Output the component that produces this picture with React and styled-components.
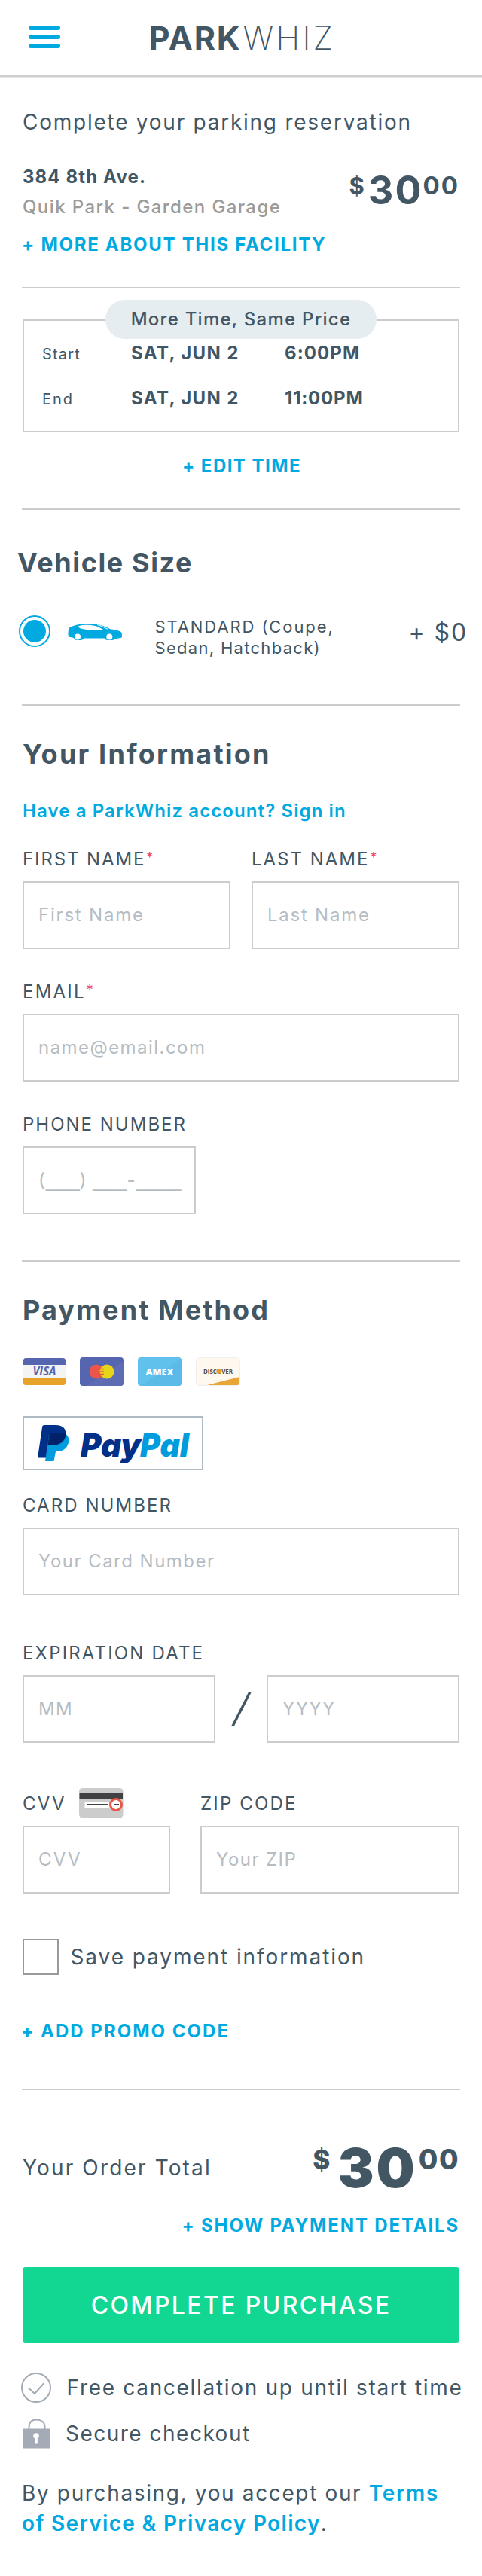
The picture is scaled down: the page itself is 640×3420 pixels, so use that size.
import React from "react";
import styled, { createGlobalStyle, css } from "styled-components";

const color = {
  ink: "#425664",
  blue: "#00a9e0",
  muted: "#9b9b9b",
  hint: "#b5bdc4",
  line: "#cccccc",
  pill: "#e6edf1",
  green: "#12d792",
  red: "#f0455a",
  icon: "#a4abb6",
};

const GlobalStyle = createGlobalStyle`
  *, *::before, *::after { box-sizing: border-box; }
  body {
    margin: 0;
    background: #fff;
    color: ${color.ink};
    font-family: Inter, "Liberation Sans", sans-serif;
  }
`;

const type = (size, lineHeight, weight) => css`
  font-size: ${size}px;
  line-height: ${lineHeight}px;
  font-weight: ${weight};
  letter-spacing: ${(p) => p.$track ?? 1.7}px;
  white-space: nowrap;
`;

const Page = styled.main`
  width: 640px;
  height: 3420px;
  overflow: hidden;
`;

const Header = styled.header`
  position: relative;
  height: 100px;
  display: flex;
  justify-content: center;
  padding: 24px 0 0 3px;
  box-shadow: 0 2px 0 #cfcfcf, 0 3px 1px #e4e4e4;
`;

const MenuButton = styled.button`
  position: absolute;
  left: 38px;
  top: 34px;
  width: 42px;
  display: flex;
  flex-direction: column;
  gap: 6px;
  padding: 0;
  border: 0;
  background: none;
`;

const MenuBar = styled.span`
  height: 6px;
  border-radius: 3px;
  background: ${color.blue};
`;

const Logo = styled.div`
  ${type(43, 53, 700)}
  display: flex;
  gap: 2px;
`;

const LogoThin = styled.span`
  font-weight: 200;
  letter-spacing: 3.2px;
`;

const Content = styled.div`
  display: flex;
  flex-direction: column;
  padding: 0 30px;
`;

const Divider = styled.hr`
  align-self: stretch;
  height: 2px;
  margin: ${(p) => p.$above}px -1px 0;
  border: 0;
  background: ${color.line};
`;

const Intro = styled.h1`
  ${type(28, 40, 400)}
  margin: 42px 0 0;
`;

const Facility = styled.section`
  display: flex;
  justify-content: space-between;
  margin-top: 33px;
`;

const Address = styled.div`
  ${type(24, 40, 700)}
`;

const Operator = styled.div`
  ${type(24, 40, 500)}
  color: ${color.muted};
`;

const ActionLink = styled.a`
  ${type(24, 30, 700)}
  display: block;
  align-self: ${(p) => p.$align || "flex-start"};
  margin-top: ${(p) => p.$above}px;
  margin-left: ${(p) => p.$nudge || 0}px;
  color: ${color.blue};
`;

const Price = styled.div`
  display: flex;
  align-items: flex-start;
  margin-top: ${(p) => (p.$large ? 0 : 12)}px;
  font-weight: ${(p) => (p.$large ? 800 : 700)};
  white-space: nowrap;
`;

const PriceSign = styled.span`
  margin-top: ${(p) => (p.$large ? 7 : 3)}px;
  margin-right: ${(p) => (p.$large ? 10 : 5)}px;
  font-size: ${(p) => (p.$large ? 35 : 31)}px;
  line-height: ${(p) => (p.$large ? 36 : 33)}px;
`;

const PriceWhole = styled.span`
  font-size: ${(p) => (p.$large ? 72 : 52)}px;
  font-weight: ${(p) => (p.$large ? 900 : 700)};
  line-height: ${(p) => (p.$large ? 72 : 52)}px;
  letter-spacing: ${(p) => (p.$large ? 3 : 2)}px;
`;

const PriceCents = styled.span`
  margin-top: ${(p) => (p.$large ? 7 : 3)}px;
  margin-left: ${(p) => (p.$large ? 2 : 0)}px;
  font-size: ${(p) => (p.$large ? 37 : 33)}px;
  line-height: ${(p) => (p.$large ? 36 : 33)}px;
  letter-spacing: ${(p) => (p.$large ? 1.5 : 2)}px;
`;

const TimeBox = styled.section`
  position: relative;
  display: flex;
  flex-direction: column;
  gap: 30px;
  height: 150px;
  margin-top: 41px;
  padding: 28px 24px 0;
  border: 2px solid ${color.line};
`;

const TimePill = styled.div`
  ${type(24, 51, 500)}
  position: absolute;
  top: -28px;
  left: 108px;
  width: 360px;
  height: 52px;
  border-radius: 26px;
  background: ${color.pill};
  text-align: center;
`;

const TimeRow = styled.div`
  display: grid;
  grid-template-columns: 118px 204px 1fr;
  align-items: baseline;
  height: 30px;
`;

const TimeLabel = styled.span`
  ${type(20, 30, 400)}
`;

const TimeValue = styled.span`
  ${type(24, 30, 700)}
`;

const Heading = styled.h2`
  ${type(36, 44, 700)}
  margin: ${(p) => p.$above}px 0 0 ${(p) => p.$nudge || 0}px;
`;

const VehicleRow = styled.label`
  display: flex;
  align-items: flex-start;
  margin: 48px -11px 0 -5px;
`;

const Radio = styled.span`
  width: 42px;
  height: 42px;
  border: 2px solid ${color.blue};
  border-radius: 50%;
  padding: 4px;
`;

const RadioDot = styled.span`
  display: block;
  width: 30px;
  height: 30px;
  border-radius: 50%;
  background: ${color.blue};
`;

const CarIcon = styled.svg`
  margin: 11px 0 0 23px;
`;

const VehicleText = styled.span`
  ${type(22, 28, 400)}
  display: flex;
  flex-direction: column;
  flex: 1;
  margin: 1px 0 0 43.5px;
`;

const VehicleLine = styled.span`
  letter-spacing: ${(p) => p.$track}px;
`;

const VehiclePrice = styled.span`
  ${type(32, 40, 400)}
  margin-top: 3px;
`;

const SignIn = styled.a`
  ${type(24, 30, 600)}
  margin-top: 39px;
  color: ${color.blue};
`;

const FieldRow = styled.div`
  display: flex;
  gap: ${(p) => p.$gap}px;
  align-items: flex-end;
  margin-top: ${(p) => p.$above}px;
`;

const Field = styled.label`
  display: flex;
  flex-direction: column;
  gap: 14px;
  width: ${(p) => p.$width}px;
  margin-top: ${(p) => p.$above || 0}px;
`;

const FieldLabel = styled.span`
  ${type(24, 30, 400)}
  display: flex;
  height: 30px;
`;

const Required = styled.sup`
  margin-left: 1px;
  color: ${color.red};
  font-size: 18px;
  line-height: 26px;
  letter-spacing: 0;
  vertical-align: top;
`;

const FieldBox = styled.span`
  ${type(24, 86, 400)}
  display: block;
  height: 90px;
  padding-left: 19px;
  border: 2px solid ${color.line};
  color: ${color.hint};
`;

/* Underscores that join into one unbroken rule. */
const Blank = styled.span`
  font-family: "Liberation Sans", sans-serif;
  font-size: 27px;
  line-height: 1;
  letter-spacing: 0;
`;

const DateSlash = styled.svg`
  margin: 0 20px 22px 21px;
`;

const CvvIcon = styled.svg`
  margin: -6px 0 -4px 17px;
`;

const Cards = styled.div`
  display: flex;
  gap: 19px;
  margin: 41px 0 0 1px;
`;

const PayPalButton = styled.button`
  display: block;
  width: 240px;
  height: 72px;
  margin-top: 40px;
  padding: 0;
  border: 2px solid #b0bac2;
  background: #fff;
`;

const SaveRow = styled.label`
  display: flex;
  align-items: center;
  gap: 15.5px;
  height: 48px;
  margin-top: 60px;
`;

const Checkbox = styled.span`
  width: 48px;
  height: 48px;
  border: 2px solid #999;
`;

const BodyText = styled.span`
  ${type(28, 40, 400)}
`;

const TotalRow = styled.div`
  display: flex;
  align-items: center;
  justify-content: space-between;
  height: 72px;
  margin-top: 67px;
`;

const PurchaseButton = styled.button`
  ${type(32, 99, 500)}
  height: 100px;
  margin-top: 40px;
  padding: 0;
  border: 0;
  border-radius: 4px;
  background: ${color.green};
  color: #fff;
  font-family: inherit;
`;

const Note = styled.div`
  display: flex;
  align-items: center;
  height: 40px;
  gap: ${(p) => p.$gap}px;
  margin: ${(p) => p.$above}px -12px 0 ${(p) => p.$nudge || 0}px;
`;

const Terms = styled.p`
  ${type(28, 40, 400)}
  margin: 39px -10px 0 -1px;
`;

const TermsLink = styled.a`
  color: ${color.blue};
  font-weight: 600;
  letter-spacing: ${(p) => p.$track}px;
`;

const cardFont = '"Open Sans", "Noto Sans", sans-serif';

function Visa() {
  return (
    <svg width="56" height="38" viewBox="0 0 56 38">
      <rect y="1" width="56" height="36" rx="3.5" fill="#f3f4f4" />
      <path d="M0 10V4.500A3.500 3.500 0 0 1 3.500 1H52.500A3.500 3.500 0 0 1 56 4.500V10Z" fill="#5565af" />
      <path d="M0 28V33.500A3.500 3.500 0 0 0 3.500 37H52.500A3.500 3.500 0 0 0 56 33.500V28Z" fill="#e6a229" />
      <text x="12.500" y="24.300" fontFamily={cardFont} fontSize="15.500" fontWeight="700" fontStyle="italic" textLength="31" lengthAdjust="spacingAndGlyphs" fill="#5565af">VISA</text>
    </svg>
  );
}

function MasterCard() {
  return (
    <svg width="58" height="38" viewBox="0 0 58 38">
      <rect width="58" height="38" rx="4" fill="#5565af" />
      <path d="M58 5V34A4 4 0 0 1 54 38H8Z" fill="#5e6cb3" />
      <circle cx="22" cy="19" r="9.500" fill="#eb5649" />
      <circle cx="36" cy="19" r="9.500" fill="#e7d519" />
      <path d="M27 15.500h5M27 19h5M27 22.500h5" stroke="#eb5649" strokeWidth="1.600" />
    </svg>
  );
}

function Amex() {
  return (
    <svg width="58" height="38" viewBox="0 0 58 38">
      <rect width="58" height="38" rx="4" fill="#5fc1ec" />
      <path d="M58 2V34A4 4 0 0 1 54 38H4Z" fill="#5bbae7" />
      <text x="10.500" y="23.800" fontFamily={cardFont} fontSize="13" fontWeight="800" textLength="37" lengthAdjust="spacingAndGlyphs" fill="#fff">AMEX</text>
    </svg>
  );
}

function Discover() {
  return (
    <svg width="59" height="38" viewBox="0 0 59 38">
      <rect x="0.500" y="0.500" width="58" height="37" rx="4" fill="#fff8ee" stroke="#f3eeee" />
      <path d="M15 37L58 26V33.500A3.500 3.500 0 0 1 54.500 37Z" fill="#e7a635" />
      <text x="10" y="21.800" fontFamily={cardFont} fontSize="8.500" fontWeight="700" textLength="39" lengthAdjust="spacingAndGlyphs" fill="#4c4c4c">DISCOVER</text>
      <circle cx="30.600" cy="18.800" r="3.200" fill="#e79c26" />
    </svg>
  );
}

function PayPalLogo() {
  return (
    <svg width="236" height="68" viewBox="0 0 236 68">
      <path d="M24 13Q24.200 10 27 10H42C52 10 56.500 15.500 55 24C53.500 33 47 37 37 37H32L29.500 53.500H18Z" fill="#003087" />
      <path d="M55.500 22C61 26 60 34 56.500 39C53 44 48 45 42 45L39.500 58H28L33 24.500Q33.300 21 37 21Z" fill="#009cde" />
      <path d="M34 20.500H55.300C56 29 50 37 37 37H31.200Z" fill="#012169" />
      <g fontFamily='"Inter", sans-serif' fontSize="42.500" fontWeight="900" fontStyle="italic">
        <text x="75" y="51.500" textLength="80" lengthAdjust="spacingAndGlyphs" fill="#003087">Pay</text>
        <text x="154" y="51.500" textLength="65" lengthAdjust="spacingAndGlyphs" fill="#009cde">Pal</text>
      </g>
    </svg>
  );
}

function Car() {
  return (
    <CarIcon width="72" height="22" viewBox="0 0 72 22">
      <path d="M2 5.500C9 1.500 18 0 27 0C40 0 46 2 57 7.500C64 8 69 9.500 71.500 12Q72.300 15 71.800 18.500L63 20.500Q61 22 58 22H53Q50 22 49 19.500H22Q20 22 16 22H12Q9 22 8 19L1 17.500Q-.5 11 2 5.500Z" fill={color.blue} />
      <path d="M14 3.200C24 .8 36 1.500 42.500 5.500L48 8.500C36 9 20 8.500 15.500 5.800Z" fill="#fff" />
      <path d="M39 1.500C45 3 49 5.500 53 7.300" fill="none" stroke="#fff" strokeWidth="1" />
      <circle cx="13" cy="17.500" r="4" fill="#fff" />
      <circle cx="55.300" cy="17.500" r="4" fill="#fff" />
    </CarIcon>
  );
}

function CvvCard() {
  return (
    <CvvIcon width="59" height="40" viewBox="0 0 59 40">
      <rect width="58.500" height="39.500" rx="4.500" fill="#cccccc" />
      <rect x="0.500" y="6" width="57.500" height="8.500" fill="#414143" />
      <rect x="7.500" y="18" width="33" height="8" fill="#fff" />
      <path d="M10.500 22H39" stroke="#414143" strokeWidth="2" />
      <circle cx="49" cy="22" r="7.500" fill="#fff" stroke="#eb5649" strokeWidth="3" />
      <path d="M46.500 22H53" stroke="#414143" strokeWidth="2" />
    </CvvIcon>
  );
}

function CheckCircle() {
  return (
    <svg width="40" height="40" viewBox="0 0 40 40" fill="none" stroke={color.icon} strokeWidth="2">
      <circle cx="20" cy="20" r="19" />
      <path d="M10 20.500L18 28L30.500 14" />
    </svg>
  );
}

function Lock() {
  return (
    <svg width="36" height="40" viewBox="0 0 36 40">
      <path d="M8.500 15V11C8.500 4.500 12.500 1.500 18.500 1.500S29.500 4.500 29.500 11V15" fill="none" stroke={color.icon} strokeWidth="2" />
      <rect y="13.500" width="36" height="26" fill={color.icon} />
      <circle cx="18" cy="23" r="3.800" fill="#fff" />
      <rect x="16.200" y="24" width="3.600" height="9.500" fill="#fff" />
    </svg>
  );
}

function PriceTag({ large }) {
  return (
    <Price $large={large}>
      <PriceSign $large={large}>$</PriceSign>
      <PriceWhole $large={large}>30</PriceWhole>
      <PriceCents $large={large}>00</PriceCents>
    </Price>
  );
}

function TextField({ label, track, hint, hintTrack, required, width, above, icon }) {
  return (
    <Field $width={width} $above={above}>
      <FieldLabel $track={track}>
        {label}
        {required && <Required>*</Required>}
        {icon}
      </FieldLabel>
      <FieldBox $track={hintTrack}>{hint}</FieldBox>
    </Field>
  );
}

const phoneHint = (
  <>
    (<Blank>___</Blank>) <Blank>___</Blank>-<Blank>____</Blank>
  </>
);

const times = [
  { label: "Start", labelTrack: 1.2, date: "SAT, JUN 2", time: "6:00PM", timeTrack: 1.1 },
  { label: "End", labelTrack: 2, date: "SAT, JUN 2", time: "11:00PM", timeTrack: 0.8 },
];

export default function App() {
  return (
    <Page>
      <GlobalStyle />
      <Header>
        <MenuButton aria-label="Menu">
          <MenuBar />
          <MenuBar />
          <MenuBar />
        </MenuButton>
        <Logo $track={1.8}>
          PARK<LogoThin>WHIZ</LogoThin>
        </Logo>
      </Header>
      <Content>
        <Intro $track={1.75}>Complete your parking reservation</Intro>
        <Facility>
          <div>
            <Address $track={1.12}>384 8th Ave.</Address>
            <Operator $track={1.4}>Quik Park - Garden Garage</Operator>
            <ActionLink $above={15} $nudge={-1} $track={1.71}>+ MORE ABOUT THIS FACILITY</ActionLink>
          </div>
          <PriceTag />
        </Facility>
        <Divider $above={41} />

        <TimeBox>
          <TimePill $track={1.26}>More Time, Same Price</TimePill>
          {times.map((t) => (
            <TimeRow key={t.label}>
              <TimeLabel $track={t.labelTrack}>{t.label}</TimeLabel>
              <TimeValue $track={1.38}>{t.date}</TimeValue>
              <TimeValue $track={t.timeTrack}>{t.time}</TimeValue>
            </TimeRow>
          ))}
        </TimeBox>
        <ActionLink $above={30} $align="center" $nudge={2} $track={1.46}>+ EDIT TIME</ActionLink>
        <Divider $above={41} />

        <Heading $above={48} $nudge={-7} $track={1.6}>Vehicle Size</Heading>
        <VehicleRow>
          <Radio><RadioDot /></Radio>
          <Car />
          <VehicleText>
            <VehicleLine $track={1.91}>STANDARD (Coupe,</VehicleLine>
            <VehicleLine $track={1.3}>Sedan, Hatchback)</VehicleLine>
          </VehicleText>
          <VehiclePrice $track={1.9}>+ $0</VehiclePrice>
        </VehicleRow>
        <Divider $above={61} />

        <Heading $above={42} $track={2.21}>Your Information</Heading>
        <SignIn $track={1.1}>Have a ParkWhiz account? Sign in</SignIn>
        <FieldRow $above={34} $gap={28}>
          <TextField label="FIRST NAME" track={1.89} hint="First Name" hintTrack={1.79} width={276} required />
          <TextField label="LAST NAME" track={1.99} hint="Last Name" hintTrack={1.76} width={276} required />
        </FieldRow>
        <TextField label="EMAIL" track={2.2} hint="name@email.com" hintTrack={1.46} width={580} above={42} required />
        <TextField label="PHONE NUMBER" track={2} hint={phoneHint} hintTrack={1} width={230} above={42} />
        <Divider $above={61} />

        <Heading $above={42} $track={2.1}>Payment Method</Heading>
        <Cards>
          <Visa />
          <MasterCard />
          <Amex />
          <Discover />
        </Cards>
        <PayPalButton aria-label="PayPal"><PayPalLogo /></PayPalButton>
        <TextField label="CARD NUMBER" track={2.06} hint="Your Card Number" hintTrack={1.47} width={580} above={32} />
        <FieldRow $above={62} $gap={0}>
          <TextField label="EXPIRATION DATE" track={2.17} hint="MM" hintTrack={1.3} width={256} />
          <DateSlash width="27" height="46" viewBox="0 0 27 46">
            <path d="M1.800 46L25.200 0" stroke={color.ink} strokeWidth="3.400" />
          </DateSlash>
          <TextField label="" hint="YYYY" hintTrack={1.4} width={256} />
        </FieldRow>
        <FieldRow $above={66} $gap={40}>
          <TextField label="CVV" track={2.28} hint="CVV" hintTrack={2.28} width={196} icon={<CvvCard />} />
          <TextField label="ZIP CODE" track={2.17} hint="Your ZIP" hintTrack={1.45} width={344} />
        </FieldRow>
        <SaveRow>
          <Checkbox />
          <BodyText $track={1.91}>Save payment information</BodyText>
        </SaveRow>
        <ActionLink $above={60} $nudge={-2} $track={2.02}>+ ADD PROMO CODE</ActionLink>
        <Divider $above={61} />

        <TotalRow>
          <BodyText $track={2.15}>Your Order Total</BodyText>
          <PriceTag large />
        </TotalRow>
        <ActionLink $above={26} $align="flex-end" $track={1.85}>+ SHOW PAYMENT DETAILS</ActionLink>
        <PurchaseButton $track={2.36}>COMPLETE PURCHASE</PurchaseButton>
        <Note $above={40} $nudge={-2} $gap={20.5}>
          <CheckCircle />
          <BodyText $track={1.69}>Free cancellation up until start time</BodyText>
        </Note>
        <Note $above={21} $gap={21}>
          <Lock />
          <BodyText $track={1.49}>Secure checkout</BodyText>
        </Note>
        <Terms $track={1.64}>
          By purchasing, you accept our <TermsLink $track={1.64}>Terms</TermsLink>
          <br />
          <TermsLink $track={1.33}>of Service &amp; Privacy Policy</TermsLink>.
        </Terms>
      </Content>
    </Page>
  );
}
